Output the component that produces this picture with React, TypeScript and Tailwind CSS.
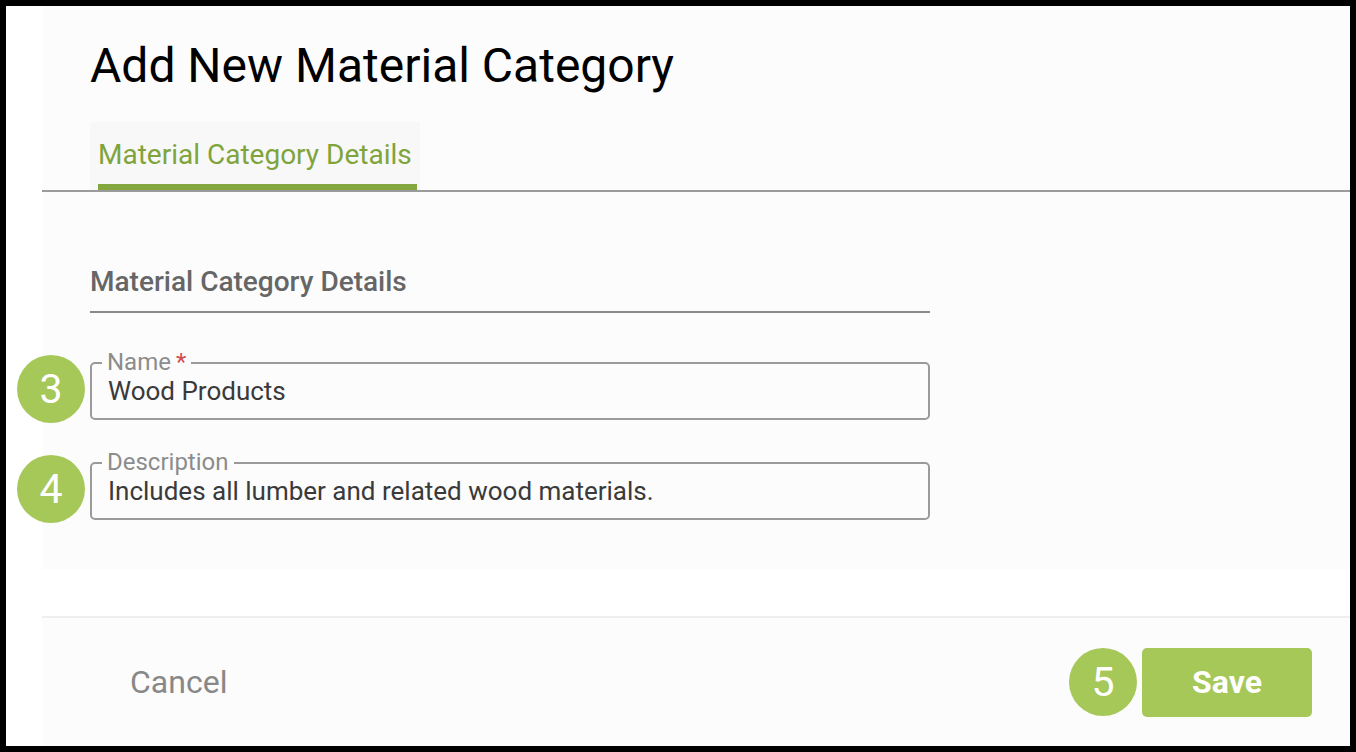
import React from 'react'

type FieldProps = {
  label: string
  value: string
  step: number
  required?: boolean
}

function StepBadge({ n, className = '' }: { n: number; className?: string }) {
  return (
    <div
      className={`absolute flex h-[68px] w-[68px] items-center justify-center rounded-full bg-[#a5c859] text-[41px] leading-none text-white ${className}`}
    >
      {n}
    </div>
  )
}

function OutlinedField({ label, value, step, required }: FieldProps) {
  return (
    <div className="relative h-[58px] w-[840px] rounded-[5px] border-2 border-[#9a9a9a]">
      <StepBadge n={step} className="-left-[75px] -top-[9px]" />
      <label className="absolute -top-[14px] left-[10px] bg-[#fcfcfc] px-[5px] text-[24px] leading-[24px] text-[#8c8c8c]">
        {label}
        {required && <span className="ml-[5px] text-[#d24a52]">*</span>}
      </label>
      <div className="flex h-full items-center pl-[16px] text-[26px] leading-[30px] text-[#3a3a3a]">
        {value}
      </div>
    </div>
  )
}

export default function App() {
  return (
    <div className="box-border h-[752px] w-[1356px] border-[6px] border-black bg-white font-['Roboto',sans-serif]">
      <div className="flex h-full flex-col pl-[36px]">
        <div className="flex h-[563px] flex-col bg-[#fcfcfc]">
          <h1 className="pl-[48px] pt-[32px] text-[48px] font-normal leading-[56px] text-black">
            Add New Material Category
          </h1>

          <div className="mt-[28px] flex pl-[48px]">
            <div className="bg-[#f8f8f8] pl-[8px] pr-[3px] pt-[17px]">
              <div className="border-b-[6px] border-[#84a73f] pb-[13px] pr-[5px] text-[28px] leading-[32px] text-[#80a43c]">
                Material Category Details
              </div>
            </div>
          </div>
          <div className="h-[2px] bg-[#9b9b9b]" />

          <div className="flex flex-col pl-[48px]">
            <div className="mt-[74px] w-[840px] border-b-2 border-[#8a8a8a] pb-[13px] text-[28px] font-medium leading-[32px] text-[#666666]">
              Material Category Details
            </div>
            <div className="mt-[49px]">
              <OutlinedField label="Name" value="Wood Products" step={3} required />
            </div>
            <div className="mt-[42px]">
              <OutlinedField
                label="Description"
                value="Includes all lumber and related wood materials."
                step={4}
              />
            </div>
          </div>
        </div>

        <div className="mt-[47px] flex flex-1 items-center justify-between border-t-2 border-[#eeeeee] bg-[#fcfcfc] pl-[88px] pr-[38px]">
          <button className="text-[32px] leading-[36px] text-[#888888]">Cancel</button>
          <div className="relative">
            <StepBadge n={5} className="right-full top-1/2 mr-[5px] -translate-y-1/2" />
            <button className="h-[69px] w-[170px] rounded-[5px] bg-[#a5c859] text-[32px] font-bold text-white">
              Save
            </button>
          </div>
        </div>
      </div>
    </div>
  )
}
